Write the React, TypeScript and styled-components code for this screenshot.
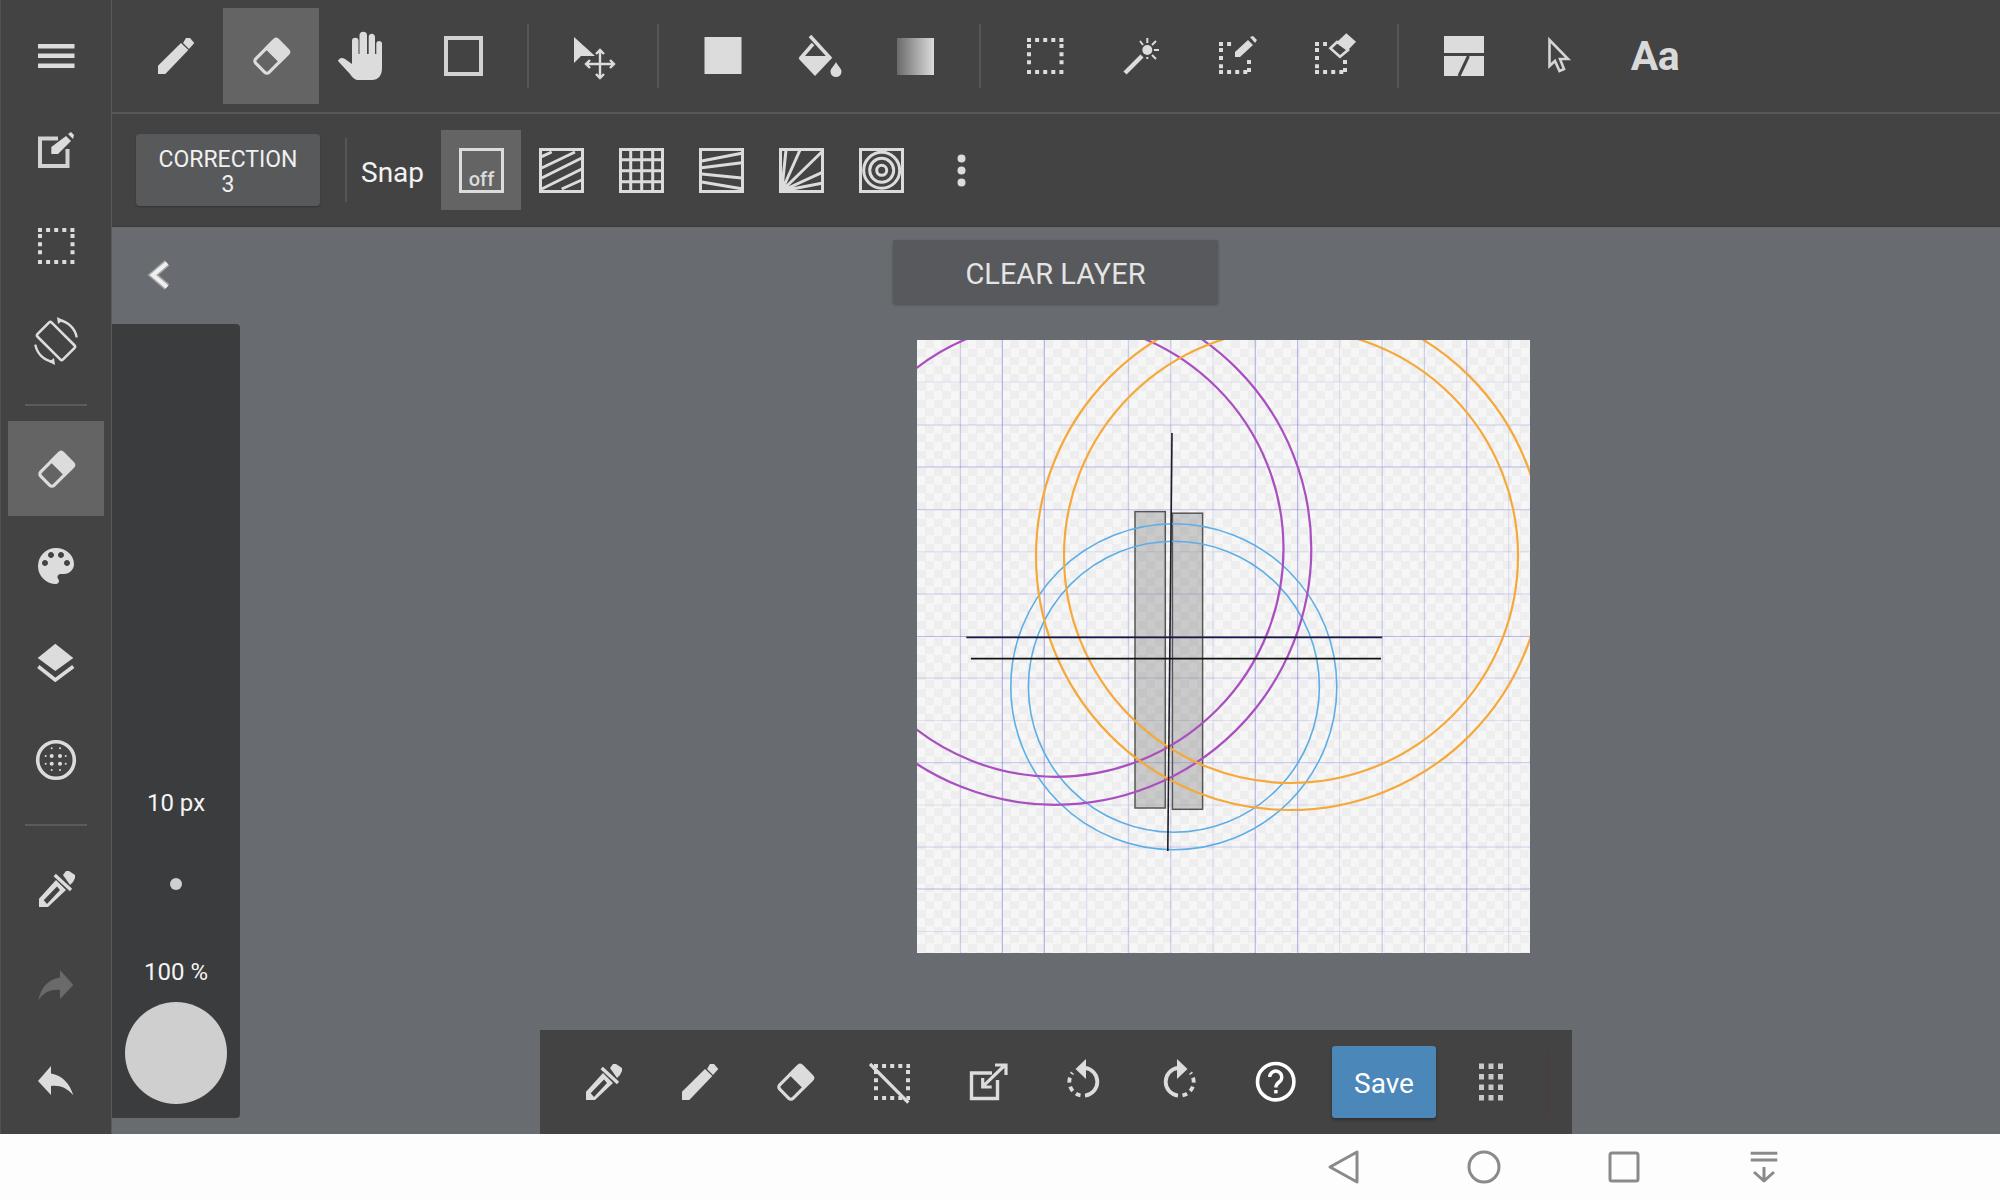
import styled, { createGlobalStyle } from "styled-components";

const GlobalStyle = createGlobalStyle`
    html, body {
        margin: 0;
        padding: 0;
        background: #fdfdfd;
        overflow: hidden;
        font-family: Roboto, "Liberation Sans", sans-serif;
    }
`

const Screen = styled.div`
    width: 2000px;
    height: 1200px;
    display: flex;
    flex-direction: column;
`

const Main = styled.div`
    height: 1134px;
    display: flex;
`

const Rail = styled.div`
    width: 112px;
    box-sizing: border-box;
    padding-top: 8px;
    background: #434343;
    border-left: 1px solid #515151;
    border-right: 1px solid #5a5a5a;
    margin: 0;
    display: flex;
    flex-direction: column;
    flex-shrink: 0;
`

const RailGroup = styled.div<{ $gap: number }>`
    display: flex;
    flex-direction: column;
    gap: ${(p) => p.$gap}px;
`

const RailButton = styled.div<{ $active?: boolean }>`
    width: 96px;
    height: 95px;
    margin-left: 7px;
    display: flex;
    align-items: center;
    justify-content: center;
    background: ${(p) => (p.$active ? "#646464" : "transparent")};
`

const RailDivider = styled.div<{ $top: number }>`
    width: 62px;
    height: 2px;
    margin: ${(p) => p.$top}px 0 15px 24px;
    background: #5b5b5b;
`

const Right = styled.div`
    flex: 1;
    display: flex;
    flex-direction: column;
    min-width: 0;
`

const ToolBar = styled.div`
    height: 112px;
    box-sizing: content-box;
    padding-left: 15px;
    background: #434343;
    border-bottom: 2px solid #575757;
    display: flex;
    align-items: center;
`

const ToolButton = styled.div<{ $active?: boolean }>`
    width: 96px;
    height: 96px;
    flex-shrink: 0;
    display: flex;
    align-items: center;
    justify-content: center;
    background: ${(p) => (p.$active ? "#646464" : "transparent")};
`

const ToolSep = styled.div`
    width: 2px;
    height: 64px;
    margin: 0 16px;
    background: #565656;
`

const GradientSwatch = styled.div`
    width: 37px;
    height: 37px;
    background: linear-gradient(to right, #6a6a6a, #dcdcdc);
`

const AaLabel = styled.span`
    font-size: 41px;
    font-weight: 700;
    color: #d9d9d9;
    letter-spacing: -0.5px;
`

const SnapBar = styled.div`
    height: 112px;
    padding-left: 24px;
    background: #434343;
    border-bottom: 1px solid #3a3a3a;
    display: flex;
    align-items: center;
`

const CorrectionButton = styled.div`
    width: 184px;
    height: 72px;
    box-sizing: border-box;
    padding-top: 4px;
    border-radius: 4px;
    background: #58595b;
    box-shadow: 0 1px 2px rgba(0, 0, 0, 0.25);
    color: #f0f0f0;
    font-size: 23px;
    line-height: 25px;
    text-align: center;
    display: flex;
    flex-direction: column;
    justify-content: center;
`

const SnapSep = styled.div`
    width: 2px;
    height: 64px;
    margin: 0 14px 0 25px;
    background: #565656;
`

const SnapLabel = styled.span`
    width: 63px;
    margin-right: 17px;
    padding-top: 4px;
    color: #f2f2f2;
    font-size: 28px;
`

const SnapButton = styled.div<{ $active?: boolean }>`
    width: 80px;
    height: 80px;
    display: flex;
    align-items: center;
    justify-content: center;
    background: ${(p) => (p.$active ? "#646464" : "transparent")};
`

const Workspace = styled.div`
    flex: 1;
    background: #686b70;
    display: flex;
    min-height: 0;
`

const SideColumn = styled.div`
    width: 128px;
    flex-shrink: 0;
    display: flex;
    flex-direction: column;
`

const BackRow = styled.div`
    height: 97px;
    box-sizing: border-box;
    padding: 24px 0 0 24px;
`

const BrushPanel = styled.div`
    height: 794px;
    box-sizing: border-box;
    padding-bottom: 14px;
    background: #3b3c3e;
    border-radius: 0 4px 4px 0;
    color: #f4f4f4;
    display: flex;
    flex-direction: column;
    align-items: center;
    justify-content: flex-end;
`

const PanelValue = styled.div`
    font-size: 24px;
    line-height: 30px;
`

const SizeDot = styled.div`
    width: 12px;
    height: 12px;
    margin: 60px 0 67px;
    border-radius: 50%;
    background: #cfcfcf;
`

const OpacityDot = styled.div`
    width: 102px;
    height: 102px;
    margin-top: 15px;
    border-radius: 50%;
    background: #cfcfcf;
`

const Stage = styled.div`
    flex: 1;
    display: flex;
    flex-direction: column;
    align-items: flex-start;
`

const ClearButton = styled.div`
    width: 325px;
    height: 64px;
    box-sizing: border-box;
    padding-top: 4px;
    margin: 13px 0 36px 653px;
    border-radius: 2px;
    background: #58595c;
    box-shadow: 0 1px 3px rgba(0, 0, 0, 0.25);
    color: #e4e4e4;
    font-size: 29px;
    display: flex;
    align-items: center;
    justify-content: center;
`

const Paper = styled.div`
    width: 613px;
    height: 613px;
    margin-left: 677px;
    background-color: #f6f6f6;
    background-image: conic-gradient(#eeeeee 25%, transparent 0 50%, #eeeeee 0 75%, transparent 0);
    background-size: 17px 17px;

    svg {
        display: block;
    }
`

const BottomBar = styled.div`
    width: 1032px;
    height: 104px;
    box-sizing: border-box;
    margin: auto 0 0 300px;
    padding-left: 15px;
    background: #434343;
    display: flex;
    align-items: center;
`

const SaveButton = styled.div`
    width: 104px;
    height: 72px;
    box-sizing: border-box;
    padding-top: 2px;
    margin: 0 7px 0 9px;
    border-radius: 3px;
    background: #4b87b8;
    box-shadow: 0 2px 3px rgba(0, 0, 0, 0.3);
    color: #fff;
    font-size: 28px;
    display: flex;
    align-items: center;
    justify-content: center;
`

const FaintMark = styled.div`
    width: 2px;
    height: 66px;
    margin-left: 8px;
    background: #4d3c3e;
`

const NavBar = styled.div`
    height: 66px;
    padding-right: 166px;
    background: #fdfdfd;
    display: flex;
    align-items: center;
    justify-content: flex-end;
`

const NavButton = styled.div`
    width: 140px;
    display: flex;
    justify-content: center;
`

const Glyph = styled.svg.attrs<{ viewBox?: string }>((p) => ({
    width: 48,
    height: 48,
    viewBox: p.viewBox ?? "0 0 48 48",
}))`
    display: block;
    overflow: visible;
    fill: #dcdcdc;
`

const LINE = "#dcdcdc"

const Pencil = () => (
    <Glyph>
        <path d="M7 42V33.7L30 11l7.3 7L14.3 42z" />
        <path d="M32 11l3-5h4l4.3 5-5.3 6z" />
    </Glyph>
)

const Eraser = () => (
    <Glyph>
        <g transform="rotate(-45 24.5 24.5)">
            <rect x="8.6" y="15.1" width="31.8" height="18.8" rx="3" fill="none" stroke={LINE} strokeWidth="3.2" />
            <path d="M25.5 13.5h13a3.5 3.5 0 0 1 3.5 3.5v15a3.5 3.5 0 0 1-3.5 3.5h-13z" />
        </g>
    </Glyph>
)

const Dropper = () => (
    <Glyph>
        <path fillRule="evenodd" d="M7 42V33.7L24 15l10 10-18 17zM11.7 35.3L15 39 28 25l-3-3.5z" />
        <path d="M22.7 10l16.3 15" stroke={LINE} strokeWidth="3.4" />
        <path d="M31 10l3-4h3l6 4v3l-2 4-3 3z" />
    </Glyph>
)

// every side is its own subpath, so that each one starts and ends on a square dot
const Dotted = ({ d }: { d: string }) => (
    <path d={d} fill="none" stroke={LINE} strokeWidth="4" strokeDasharray="4 4.1" />
)

const SelectBox = () => (
    <Glyph>
        <Dotted d="M6 8H42.5M6 40H42.5M8 12.1V36M40.5 12.1V36" />
    </Glyph>
)

const Hand = () => (
    <Glyph>
        <path d="M9 9a3.2 3.2 0 0 1 6.5 0V22h1V3.5a3.7 3.7 0 0 1 7.5 0V22h1.7V4.5a3.2 3.2 0 0 1 6.3 0V22h1.3V11a3 3 0 0 1 5.7 0V36c0 8-4 12-10 12H16c-4 0-6-2-9-6L-5 29c1-3 4-4 7-2l7 5z" />
    </Glyph>
)

const Frame = () => (
    <Glyph>
        <rect x="7" y="6" width="35" height="36" fill="none" stroke="#d2d2d2" strokeWidth="4" />
    </Glyph>
)

const MoveArrow = () => (
    <Glyph>
        <path d="M5 5V31l7-7h14z" />
        <path
            d="M31 19V45M18 32H44M27 22l4-4 4 4M27 42l4 4 4-4M21 28l-4 4 4 4M41 28l4 4-4 4"
            fill="none"
            stroke={LINE}
            strokeWidth="2.4"
        />
    </Glyph>
)

const FillSquare = () => (
    <Glyph>
        <rect x="5.5" y="5" width="37" height="37" />
    </Glyph>
)

const Bucket = () => (
    <Glyph>
        <path d="M3.9 27L20 44l16-17-2-3H6z" />
        <path d="M15 4l21 23M5 27L18 12" fill="none" stroke={LINE} strokeWidth="3.5" />
        <path d="M41 30c2 4 5.5 6.5 5.5 9.5a5.5 5.5 0 0 1-11 0c0-3 3.5-5.5 5.5-9.5z" />
    </Glyph>
)

const Wand = () => (
    <Glyph>
        <path d="M8 41l17-17" stroke={LINE} strokeWidth="4.5" />
        <circle cx="30.3" cy="18" r="5" />
        <path d="M30.3 6v5M30.3 25v2M23 9l3 4M35 13l4-4M37 18h5M35 23l4 4" stroke={LINE} strokeWidth="2" />
    </Glyph>
)

const SelectPen = () => (
    <Glyph>
        <Dotted d="M6 12H22M8 16V37M6 40H38M36 40V24" />
        <path d="M22 25V20L35 8l5 5-13 12z" />
        <path d="M37 5l3-1 4 4-2 3z" />
    </Glyph>
)

const SelectEraser = () => (
    <Glyph>
        <Dotted d="M6 12H18M8 16V37M6 40H38M36 40V28" />
        <path d="M37.3 1.3L47 9.7 39 18 28 10z" />
        <path d="M28 10l11 8-8 6.7-9.6-8.4z" fill="none" stroke={LINE} strokeWidth="2.6" />
    </Glyph>
)

const SplitPanel = () => (
    <Glyph>
        <rect x="5" y="4" width="40" height="17" />
        <rect x="5" y="24" width="40" height="20" />
        <path d="M29.5 24L20 44" stroke="#434343" strokeWidth="3" />
    </Glyph>
)

const Cursor = () => (
    <Glyph>
        <path d="M14.5 8V34l5.5-5 4.5 10 4.5-2-4-10h8z" fill="none" stroke="#d4d4d4" strokeWidth="2.6" />
    </Glyph>
)

const Menu = () => (
    <Glyph>
        <path d="M6 12h36.5v4.5H6zM6 21.5h36.5V26H6zM6 31.5h36.5V36H6z" />
    </Glyph>
)

const EditNote = () => (
    <Glyph>
        <path d="M26 11.5H8V39H35.5V22" fill="none" stroke="#d2d2d2" strokeWidth="4" />
        <path d="M19.3 27V20L34 9l5 5-13 13z" />
        <path d="M36 7l3-2 3 3-1 4z" />
    </Glyph>
)

const RotateDevice = () => (
    <Glyph>
        <rect x="6" y="14" width="36" height="20" rx="2" transform="rotate(45 24 24)" fill="none" stroke={LINE} strokeWidth="2.6" />
        <path d="M27.6 3.3A21 21 0 0 1 44.7 20.4M20.4 44.7A21 21 0 0 1 3.3 27.6" fill="none" stroke={LINE} strokeWidth="2.4" />
        <path d="M25 0l6 3-5 4zM23 48l-6-3 5-4z" />
    </Glyph>
)

const Palette = () => (
    <Glyph viewBox="0 0 24 24">
        <path d="M12 3a9 9 0 0 0 0 18c.83 0 1.5-.67 1.5-1.5 0-.39-.15-.74-.39-1.01-.23-.26-.38-.61-.38-.99 0-.83.67-1.5 1.5-1.5H16c2.76 0 5-2.24 5-5 0-4.42-4.03-8-9-8zm-5.5 9c-.83 0-1.5-.67-1.5-1.5S5.67 9 6.5 9 8 9.67 8 10.5 7.33 12 6.5 12zm3-4C8.67 8 8 7.33 8 6.5S8.67 5 9.5 5s1.5.67 1.5 1.5S10.33 8 9.5 8zm5 0c-.83 0-1.5-.67-1.5-1.5S13.67 5 14.5 5s1.5.67 1.5 1.5S15.33 8 14.5 8zm3 4c-.83 0-1.5-.67-1.5-1.5S16.67 9 17.5 9s1.5.67 1.5 1.5-.67 1.5-1.5 1.5z" />
    </Glyph>
)

const Layers = () => (
    <Glyph>
        <path d="M23.3 4.7L41.3 19 23.3 32 5.7 19z" />
        <path d="M6.3 27.5L23.3 41l18-13.5" fill="none" stroke={LINE} strokeWidth="3.6" />
    </Glyph>
)

const DOT_COLUMNS = [13.7, 19.7, 28, 33.7]
const DOT_ROWS = [12.3, 20, 27.7, 34]

const DotGrid = () => (
    <Glyph>
        <circle cx="24" cy="24" r="18.3" fill="none" stroke={LINE} strokeWidth="3.6" />
        {DOT_ROWS.map((y, r) =>
            DOT_COLUMNS.map((x, c) => {
                const inner = (r === 1 || r === 2) && (c === 1 || c === 2)
                const corner = (r === 0 || r === 3) && (c === 0 || c === 3)
                if (corner) return null
                return <circle key={`${r}-${c}`} cx={x} cy={y} r={inner ? 2 : 1} />
            })
        )}
    </Glyph>
)

const Redo = () => (
    <Glyph>
        <path fill="#6a6a6a" d="M28 8l13.3 15L28 37v-9c-9-1-16 2-21.7 10.3C9 26 16 17 28 15.5z" />
    </Glyph>
)

const Undo = () => (
    <Glyph>
        <path d="M19 7L6 22l13 14v-9c9-1 16 2 22.3 9.3C38 25 30 16 19 14.5z" />
    </Glyph>
)

const Chevron = () => (
    <Glyph>
        <path d="M31 12L17 24l14 12" fill="none" stroke="#a8a8a8" strokeWidth="7" />
        <path d="M31 12L17 24l14 12" fill="none" stroke="#f0f0f0" strokeWidth="4.2" />
    </Glyph>
)

const NoSelection = () => (
    <Glyph>
        <Dotted d="M7 8H43M7 40H43M9 12.1V36M41 12.1V36" />
        <path d="M3 6l38.3 38.7" stroke={LINE} strokeWidth="3.2" />
    </Glyph>
)

const Export = () => (
    <Glyph>
        <path d="M29 15H8.5V40.5H34.5V22" fill="none" stroke={LINE} strokeWidth="3.4" />
        <path d="M19.7 28.7L42 7M32 7h11v10M19.7 20v9h9" fill="none" stroke={LINE} strokeWidth="3.2" />
    </Glyph>
)

const Turn = ({ mirror }: { mirror?: boolean }) => (
    <Glyph>
        <g transform={mirror ? "matrix(-1 0 0 1 49 0)" : undefined}>
            <path d="M26 9.8A14 14 0 0 1 26 37.6" fill="none" stroke={LINE} strokeWidth="3.8" />
            <path d="M21.5 37.4A14 14 0 0 1 13.5 14.8" fill="none" stroke={LINE} strokeWidth="3.8" strokeDasharray="5 4" />
            <path d="M16.5 11L27 1V21z" />
        </g>
    </Glyph>
)

const Help = () => (
    <Glyph>
        <circle cx="24.7" cy="23.7" r="18.2" fill="none" stroke="#fff" strokeWidth="3.6" />
        <path d="M18.7 19a6 6 0 1 1 9.5 5c-2 1.5-3.3 2.5-3.3 5.5" fill="none" stroke="#fff" strokeWidth="3.4" />
        <rect x="23.2" y="32" width="3.4" height="3.4" fill="#fff" />
    </Glyph>
)

const AppsGrid = () => (
    <Glyph>
        {[5.5, 16, 26.5, 37].map((y) =>
            [12, 21.5, 31].map((x) => <rect key={`${x}-${y}`} x={x} y={y} width="5" height="5.5" fill="#c8c8c8" />)
        )}
    </Glyph>
)

const SnapGlyph = styled.svg.attrs({ width: 45, height: 45, viewBox: "0 0 45 45" })`
    display: block;
    fill: none;
    stroke: #dcdcdc;
    stroke-width: 3;
`

const SnapOffText = styled.text`
    fill: #dcdcdc;
    stroke: none;
    font-size: 20px;
    font-weight: 500;
    font-family: Roboto, sans-serif;
    text-anchor: middle;
`

const SnapBox = () => <rect x="1.5" y="1.5" width="42" height="42" />

const SnapOff = () => (
    <SnapGlyph>
        <SnapBox />
        <SnapOffText x="22.5" y="38">off</SnapOffText>
    </SnapGlyph>
)

const SnapHatch = () => (
    <SnapGlyph>
        <SnapBox />
        <path d="M2.7 8.7L12.7 4M2.7 20L36 4M2.7 30L42.7 10M2.7 41L42.7 21M22.7 41L42.7 32" />
    </SnapGlyph>
)

const SnapGrid = () => (
    <SnapGlyph>
        <SnapBox />
        <path d="M11.7 2V43M22.7 2V43M33.7 2V43M2 11.7H43M2 22.7H43M2 33.7H43" />
    </SnapGlyph>
)

const SnapPerspective = () => (
    <SnapGlyph>
        <SnapBox />
        <path d="M2.7 13L42.7 5.3M2.7 19.7L42.7 14.7M2.7 26L42.7 30M2.7 34L42.7 40.7" />
    </SnapGlyph>
)

const SnapRadial = () => (
    <SnapGlyph>
        <SnapBox />
        <path d="M2.7 43L7 2M2.7 43L21 2M2.7 43L42.7 4M2.7 43L42.7 24.7M2.7 43L42.7 35.3" />
        <path d="M2 44V33L13 44z" fill="#dcdcdc" stroke="none" />
    </SnapGlyph>
)

const SnapRings = () => (
    <SnapGlyph>
        <SnapBox />
        <circle cx="22.7" cy="22.3" r="18" />
        <circle cx="22.7" cy="22.3" r="12" />
        <circle cx="22.7" cy="22.3" r="5" />
    </SnapGlyph>
)

const SnapMore = () => (
    <SnapGlyph>
        <circle cx="22.5" cy="10.5" r="4" fill="#dcdcdc" stroke="none" />
        <circle cx="22.5" cy="22.5" r="4" fill="#dcdcdc" stroke="none" />
        <circle cx="22.5" cy="34.5" r="4" fill="#dcdcdc" stroke="none" />
    </SnapGlyph>
)

const NavGlyph = styled.svg.attrs({ width: 48, height: 48, viewBox: "0 0 48 48" })`
    display: block;
    fill: none;
    stroke: #8a8a8a;
    stroke-width: 3;
    stroke-linejoin: round;
`

// 0 faint, 1 medium, 2 strong
const GRID_X: [number, number][] = [
    [960.5, 1], [1002.4, 2], [1044.3, 2], [1086.6, 0], [1128.4, 1], [1170.7, 1], [1213, 0],
    [1255.3, 2], [1297.6, 2], [1339.5, 0], [1382.2, 1], [1424.4, 1], [1466.7, 2], [1508.6, 0],
]
const GRID_Y: [number, number][] = [
    [382, 0], [425, 1], [467, 2], [509.6, 1], [551.8, 0], [594, 1], [636.5, 2],
    [678, 1], [720.5, 0], [762.7, 1], [805, 0], [847, 1], [889, 2], [931.5, 0],
]
const GRID_ALPHA = [0.14, 0.26, 0.4]

const Drawing = () => (
    <svg width="613" height="613" viewBox="917 340 613 613" fill="none">
        {GRID_X.map(([x, w]) => (
            <path key={x} d={`M${x} 340V953`} stroke="#5a5ad8" strokeOpacity={GRID_ALPHA[w]} strokeWidth="1.2" />
        ))}
        {GRID_Y.map(([y, w]) => (
            <path key={y} d={`M917 ${y}H1530`} stroke="#5a5ad8" strokeOpacity={GRID_ALPHA[w]} strokeWidth="1.2" />
        ))}
        <rect x="1135" y="511.6" width="30.3" height="296.4" fill="#6e6e6e" fillOpacity="0.32" stroke="#555" strokeWidth="1.5" />
        <rect x="1172.4" y="513.2" width="30.2" height="296.1" fill="#6e6e6e" fillOpacity="0.32" stroke="#555" strokeWidth="1.5" />
        <circle cx="1173.8" cy="686.7" r="163" stroke="#5caee6" strokeWidth="1.6" />
        <circle cx="1173.9" cy="686.8" r="145.5" stroke="#5caee6" strokeWidth="1.6" />
        <circle cx="1055.5" cy="549" r="255.8" stroke="#a94fc0" strokeWidth="2.2" />
        <circle cx="1055.5" cy="548.8" r="228" stroke="#a94fc0" strokeWidth="2.2" />
        <circle cx="1290" cy="556" r="254" stroke="#f5a93a" strokeWidth="2.2" />
        <circle cx="1291" cy="556" r="227" stroke="#f5a93a" strokeWidth="2.2" />
        <path d="M1172 433L1167.8 851" stroke="#1c1c22" strokeWidth="1.6" />
        <path d="M966.3 637.4H1382.2" stroke="#1a1a40" strokeWidth="1.6" />
        <path d="M970.9 658.6H1381" stroke="#111" strokeWidth="1.6" />
    </svg>
)

export default function App() {
    return (
        <Screen>
            <GlobalStyle />
            <Main>
                <Rail>
                    <RailGroup $gap={0}>
                        <RailButton><Menu /></RailButton>
                        <RailButton><EditNote /></RailButton>
                        <RailButton><SelectBox /></RailButton>
                        <RailButton><RotateDevice /></RailButton>
                    </RailGroup>
                    <RailDivider $top={16} />
                    <RailGroup $gap={2}>
                        <RailButton $active><Eraser /></RailButton>
                        <RailButton><Palette /></RailButton>
                        <RailButton><Layers /></RailButton>
                        <RailButton><DotGrid /></RailButton>
                    </RailGroup>
                    <RailDivider $top={17} />
                    <RailGroup $gap={2}>
                        <RailButton><Dropper /></RailButton>
                        <RailButton><Redo /></RailButton>
                        <RailButton><Undo /></RailButton>
                    </RailGroup>
                </Rail>
                <Right>
                    <ToolBar>
                        <ToolButton><Pencil /></ToolButton>
                        <ToolButton $active><Eraser /></ToolButton>
                        <ToolButton><Hand /></ToolButton>
                        <ToolButton><Frame /></ToolButton>
                        <ToolSep />
                        <ToolButton><MoveArrow /></ToolButton>
                        <ToolSep />
                        <ToolButton><FillSquare /></ToolButton>
                        <ToolButton><Bucket /></ToolButton>
                        <ToolButton><GradientSwatch /></ToolButton>
                        <ToolSep />
                        <ToolButton><SelectBox /></ToolButton>
                        <ToolButton><Wand /></ToolButton>
                        <ToolButton><SelectPen /></ToolButton>
                        <ToolButton><SelectEraser /></ToolButton>
                        <ToolSep />
                        <ToolButton><SplitPanel /></ToolButton>
                        <ToolButton><Cursor /></ToolButton>
                        <ToolButton><AaLabel>Aa</AaLabel></ToolButton>
                    </ToolBar>
                    <SnapBar>
                        <CorrectionButton>
                            <span>CORRECTION</span>
                            <span>3</span>
                        </CorrectionButton>
                        <SnapSep />
                        <SnapLabel>Snap</SnapLabel>
                        <SnapButton $active><SnapOff /></SnapButton>
                        <SnapButton><SnapHatch /></SnapButton>
                        <SnapButton><SnapGrid /></SnapButton>
                        <SnapButton><SnapPerspective /></SnapButton>
                        <SnapButton><SnapRadial /></SnapButton>
                        <SnapButton><SnapRings /></SnapButton>
                        <SnapButton><SnapMore /></SnapButton>
                    </SnapBar>
                    <Workspace>
                        <SideColumn>
                            <BackRow><Chevron /></BackRow>
                            <BrushPanel>
                                <PanelValue>10 px</PanelValue>
                                <SizeDot />
                                <PanelValue>100 %</PanelValue>
                                <OpacityDot />
                            </BrushPanel>
                        </SideColumn>
                        <Stage>
                            <ClearButton>CLEAR LAYER</ClearButton>
                            <Paper><Drawing /></Paper>
                            <BottomBar>
                                <ToolButton><Dropper /></ToolButton>
                                <ToolButton><Pencil /></ToolButton>
                                <ToolButton><Eraser /></ToolButton>
                                <ToolButton><NoSelection /></ToolButton>
                                <ToolButton><Export /></ToolButton>
                                <ToolButton><Turn /></ToolButton>
                                <ToolButton><Turn mirror /></ToolButton>
                                <ToolButton><Help /></ToolButton>
                                <SaveButton>Save</SaveButton>
                                <ToolButton><AppsGrid /></ToolButton>
                                <FaintMark />
                            </BottomBar>
                        </Stage>
                    </Workspace>
                </Right>
            </Main>
            <NavBar>
                <NavButton>
                    <NavGlyph><path d="M10 24L37 9V39z" /></NavGlyph>
                </NavButton>
                <NavButton>
                    <NavGlyph><circle cx="24" cy="24" r="15" /></NavGlyph>
                </NavButton>
                <NavButton>
                    <NavGlyph><rect x="10" y="10" width="28" height="28" rx="2" /></NavGlyph>
                </NavButton>
                <NavButton>
                    <NavGlyph><path d="M10.7 10.3H37.3M10.7 17H37.3M24 24V38M14 29l10 9 10-9" /></NavGlyph>
                </NavButton>
            </NavBar>
        </Screen>
    )
}
